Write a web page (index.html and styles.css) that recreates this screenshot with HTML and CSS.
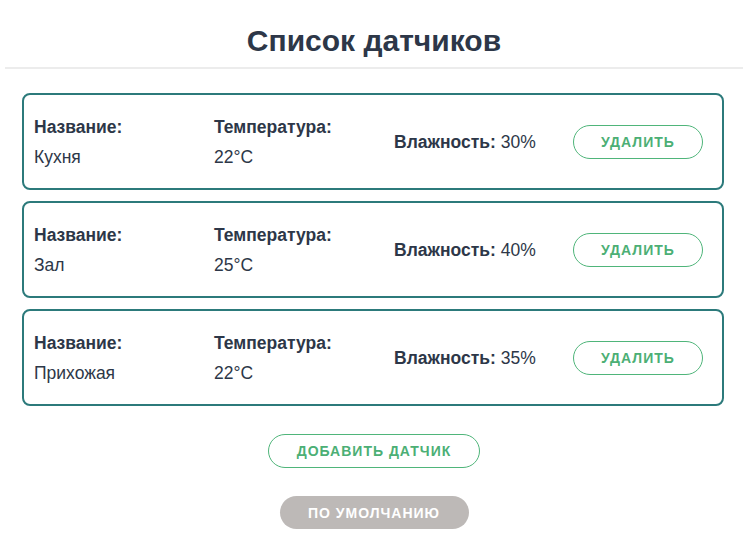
FILE: index.html
```html
<!DOCTYPE html>
<html lang="ru">
<head>
<meta charset="utf-8">
<title>Список датчиков</title>
<link rel="stylesheet" href="styles.css">
</head>
<body>
<header class="header">
  <h1 class="title">Список датчиков</h1>
</header>
<main class="list">
  <div class="card">
    <div class="col">
      <div class="label">Название:</div>
      <div class="value">Кухня</div>
    </div>
    <div class="col">
      <div class="label">Температура:</div>
      <div class="value">22°C</div>
    </div>
    <div class="col humidity"><span class="label">Влажность:</span> 30%</div>
    <button class="btn-outline btn-delete">Удалить</button>
  </div>
  <div class="card">
    <div class="col">
      <div class="label">Название:</div>
      <div class="value">Зал</div>
    </div>
    <div class="col">
      <div class="label">Температура:</div>
      <div class="value">25°C</div>
    </div>
    <div class="col humidity"><span class="label">Влажность:</span> 40%</div>
    <button class="btn-outline btn-delete">Удалить</button>
  </div>
  <div class="card">
    <div class="col">
      <div class="label">Название:</div>
      <div class="value">Прихожая</div>
    </div>
    <div class="col">
      <div class="label">Температура:</div>
      <div class="value">22°C</div>
    </div>
    <div class="col humidity"><span class="label">Влажность:</span> 35%</div>
    <button class="btn-outline btn-delete">Удалить</button>
  </div>
</main>
<div class="actions">
  <button class="btn-outline btn-add">Добавить датчик</button>
  <button class="btn-default">По умолчанию</button>
</div>
</body>
</html>
```
FILE: styles.css
```css
* { box-sizing: border-box; }
body {
  margin: 0;
  background: #fff;
  font-family: "Liberation Sans", Arial, sans-serif;
  color: #2d3748;
}
.header {
  margin-left: 5px;
  border-bottom: 2px solid #ececec;
  padding: 23px 0 8px;
  text-align: center;
}
.title {
  margin: 0;
  font-size: 30px;
  line-height: 36px;
  font-weight: 700;
  color: #2d3748;
}
.list {
  display: flex;
  flex-direction: column;
  gap: 11px;
  margin: 24px 0 0 22px;
  width: 702px;
}
.card {
  display: flex;
  align-items: center;
  height: 97px;
  border: 2px solid #2c7a7b;
  border-radius: 8px;
  padding: 0 18px 0 10px;
}
.col {
  width: 180px;
  font-size: 17.5px;
  line-height: 24px;
}
.col .value { margin-top: 6px; }
.label { font-weight: 700; }
.humidity { width: 179px; }
.btn-outline {
  font-family: "Liberation Sans", Arial, sans-serif;
  background: #fff;
  border: 1px solid #4fb57a;
  color: #4caf75;
  border-radius: 17px;
  height: 34px;
  font-size: 14px;
  font-weight: 700;
  letter-spacing: 1px;
  text-transform: uppercase;
  padding: 0;
}
.btn-delete { width: 130px; }
.actions {
  display: flex;
  flex-direction: column;
  align-items: center;
  gap: 28px;
  margin: 28px 0 0 5px;
}
.btn-add { width: 212px; }
.btn-default {
  font-family: "Liberation Sans", Arial, sans-serif;
  width: 189px;
  height: 33px;
  border: none;
  border-radius: 17px;
  background: #bdb9b7;
  color: #fff;
  font-size: 14px;
  font-weight: 700;
  letter-spacing: 1px;
  text-transform: uppercase;
  padding: 0;
}
```
